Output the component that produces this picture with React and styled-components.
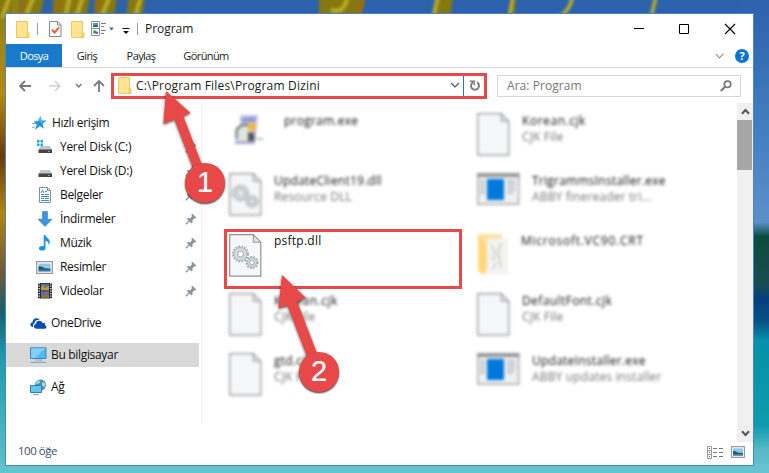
import React from "react";
import styled, { createGlobalStyle } from "styled-components";

const RED = "#e94848";

const places = [
	{ name: "Yerel Disk (C:)", icon: "system" },
	{ name: "Yerel Disk (D:)", icon: "disk" },
	{ name: "Belgeler", icon: "document" },
	{ name: "İndirmeler", icon: "download" },
	{ name: "Müzik", icon: "music" },
	{ name: "Resimler", icon: "picture" },
	{ name: "Videolar", icon: "video" },
];

const files = [
	{ name: "program.exe", icon: "setup", indent: 10 },
	{ name: "Korean.cjk", type: "CJK File", icon: "page", spacing: 0.55 },
	{ name: "UpdateClient19.dll", type: "Resource DLL", icon: "dll" },
	{ name: "TrigrammsInstaller.exe", type: "ABBY finereader tri...", icon: "app", indent: 10 },
	{ name: "psftp.dll", icon: "dll", selected: true },
	{ name: "Microsoft.VC90.CRT", icon: "folder", indent: -1, spacing: 0.75 },
	{ name: "Korean.cjk", type: "CJK File", icon: "page", spacing: 0.55 },
	{ name: "DefaultFont.cjk", type: "CJK File", icon: "page", spacing: 0.4 },
	{ name: "gtd.cjk", type: "CJK File", icon: "page" },
	{ name: "UpdateInstaller.exe", type: "ABBY updates installer", icon: "app", indent: 10 },
];

export default function App() {
	return (
		<>
			<GlobalStyle />
			<Desktop>
				<Wallpaper />
				<Window>
					<TitleBar />
					<Ribbon />
					<Navigation />
					<Body>
						<Sidebar />
						<Files>
							{files.map((file, index) => (
								<FileItem key={index} file={file} />
							))}
						</Files>
						<Scrollbar>
							<Chevron up />
							<Thumb />
							<Chevron />
						</Scrollbar>
					</Body>
					<StatusBar>
						<span>100 öğe</span>
						<DetailsIcon />
						<PictureIcon width="14" height="12" />
					</StatusBar>
				</Window>
				<Arrows />
				<Badge $x={185} $y={163}>1</Badge>
				<Badge $x={299} $y={352}>2</Badge>
			</Desktop>
		</>
	);
}

const TitleBar = () => (
	<TitleRow>
		<FolderIcon />
		<Separator $left={7} $right={11} />
		<CheckIcon />
		<Spacer $w={9} />
		<FolderIcon />
		<Spacer $w={6} />
		<ViewIcon />
		<Separator $left={7} $right={7} />
		<Title>Program</Title>
		<WindowButtons width="102" height="12" viewBox="0 0 102 12" fill="none" stroke="#000">
			<path d="M0 5.5h10M45.5 1.5h9v9h-9z" />
			<path d="M91 1l10 10M101 1L91 11" strokeWidth="1.1" />
		</WindowButtons>
	</TitleRow>
);

const Ribbon = () => (
	<RibbonRow>
		<Tab $w={56} $active>Dosya</Tab>
		<Tab $w={50}>Giriş</Tab>
		<Tab $w={58}>Paylaş</Tab>
		<Tab $w={72}>Görünüm</Tab>
		<RibbonTools>
			<svg width="9" height="6" fill="none" stroke="#999" strokeWidth="1.2">
				<path d="M.7.8l3.8 4 3.8-4" />
			</svg>
			<Help>?</Help>
		</RibbonTools>
	</RibbonRow>
);

const Navigation = () => (
	<NavRow>
		<NavArrows width="86" height="16" viewBox="0 0 86 16" fill="none">
			<path d="M12 8H1M6 3L1 8l5 5" stroke="#777" strokeWidth="1.8" />
			<path d="M30 8h11M36 3l5 5-5 5" stroke="#d0d0d0" strokeWidth="1.5" />
			<path d="M57 6l2.7 3 2.7-3" stroke="#777" strokeWidth="1.5" />
			<path d="M80 14V3M75 8l5-5 5 5" stroke="#7b7b7b" strokeWidth="1.8" />
		</NavArrows>
		<AddressBox>
			<FolderIcon />
			<Address>C:\Program Files\Program Dizini</Address>
			<svg width="10" height="7" fill="none" stroke="#555" strokeWidth="1.2">
				<path d="M1 1l4 4 4-4" />
			</svg>
			<Refresh>
				<svg width="12" height="13" viewBox="0 0 12 13" fill="none" stroke="#7b7b7b">
					<path d="M8.2 3.4A4 4 0 1 1 4 3.3" strokeWidth="1.9" />
					<path d="M1 2.2h4.3v4" strokeWidth="1.5" />
				</svg>
			</Refresh>
		</AddressBox>
		<SearchBox>
			<span>Ara: Program</span>
			<svg width="12" height="12" viewBox="0 0 12 12" fill="none" stroke="#777">
				<circle cx="7.5" cy="4.3" r="3.2" strokeWidth="1.7" />
				<path d="M5 6.8L.8 11" strokeWidth="2" />
			</svg>
		</SearchBox>
	</NavRow>
);

const Sidebar = () => (
	<Side>
		<SideRow $pad={26}>
			<StarIcon />
			<span>Hızlı erişim</span>
		</SideRow>
		{places.map((place) => (
			<SideRow key={place.name} $pad={30} $gap={7}>
				<PlaceIcon type={place.icon} />
				<span>{place.name}</span>
				<Pin width="12" height="12" viewBox="0 0 12 12">
					<path d="M7.3.8l4 3.7-1 .9-.8-.2-2.1 2.2.2 2.3-1 .8L1.8 6l1-.9 2.2.3L7 3.2 6.4 1.7z" fill="#8796a3" />
					<path d="M4.2 7.8L.8 11.2" stroke="#8796a3" strokeWidth="1.3" />
				</Pin>
			</SideRow>
		))}
		<SideRow $pad={24} $top={8} $gap={4}>
			<CloudIcon />
			<span>OneDrive</span>
		</SideRow>
		<SideRow $pad={24} $top={8} $gap={4} $selected>
			<ComputerIcon />
			<span>Bu bilgisayar</span>
		</SideRow>
		<SideRow $pad={24} $top={8} $gap={4}>
			<NetworkIcon />
			<span>Ağ</span>
		</SideRow>
	</Side>
);

const FileItem = ({ file }) => (
	<Cell $selected={file.selected}>
		<IconSlot $top={file.selected ? 2 : 1}>
			<FileIcon type={file.icon} />
		</IconSlot>
		<FileText $indent={file.indent || 0}>
			<FileName $spacing={file.spacing}>{file.name}</FileName>
			{file.type && <FileType>{file.type}</FileType>}
		</FileText>
	</Cell>
);

/* icons */

const FolderIcon = () => (
	<svg width="14" height="17" viewBox="0 0 14 17">
		<path d="M.5.5h11v10.2l1.5 1.2v4.6H.5z" fill="#ffe494" stroke="#ecc75e" />
		<path d="M10.5 16v-4.2l1-1.2 1.3 1.3V16z" fill="#f7d06a" />
	</svg>
);

const CheckIcon = () => (
	<svg width="13" height="16" viewBox="0 0 13 16" fill="none">
		<path d="M.5.5h8.3l3.2 3.2v11.8H.5z" fill="#f7f8fa" stroke="#8a8a8a" />
		<path d="M8.5.5v3.5H12" stroke="#8a8a8a" />
		<path d="M3 8.7l2.5 3L10 6.3" stroke="#e8552d" strokeWidth="1.8" />
	</svg>
);

const ViewIcon = () => (
	<svg width="39" height="16" viewBox="0 0 39 16" fill="none">
		<path d="M.5.5h8v14h-8zM.5 7.5h8" stroke="#919191" fill="#fff" />
		<path d="M2 2h5v4H2z" fill="#4a94d8" />
		<path d="M2 5l3-1 2 1v1H2z" fill="#246a50" />
		<circle cx="3.7" cy="11" r="1.7" fill="#3c9d50" />
		<circle cx="5.8" cy="11.8" r="1.3" fill="#3f6fc2" />
		<path d="M10 2.5h5M10 5.5h3M10 9.5h5M10 12.5h3" stroke="#7d7d7d" />
		<path d="M18 6.5h5l-2.5 3z" fill="#3572bd" />
		<path d="M31.5 7.5h7" stroke="#111" />
		<path d="M32 10h6l-3 3z" fill="#111" />
	</svg>
);

const StarIcon = () => (
	<svg width="15" height="14" viewBox="0 0 15 14">
		<path d="M8.4.2l1.3 4.3 5 .2-4.1 2.9 1.3 5.2-4.1-2.8L3 14l1.7-5.3L1.6 5.4l4.5-.5z" fill="#2491e0" />
		<path d="M8.4.2l1.3 4.3 5 .2-5.5 2-3.1-1.8z" fill="#4eb2f2" />
		<path d="M.3 7.5h2.8M.3 11.5l2.5-.5" stroke="#4aa9e8" />
	</svg>
);

const PlaceIcon = ({ type }) => {
	switch (type) {
		case "system":
		case "disk":
			return (
				<svg width="17" height="16" viewBox="0 0 17 16">
					{type === "system" && <path d="M1 1h2.5v2.5H1zM4.5 1H7v2.5H4.5zM1 4.5h2.5V7H1zM4.5 4.5H7V7H4.5z" fill="#15a9e8" />}
					<path d="M4.5 7h9.5l2 4H2.5z" fill="#c3c6c9" />
					<path d="M2.5 10.5H16V14H2.5z" fill="#424548" />
					<path d="M12 12h2v1h-2z" fill="#49d27c" />
				</svg>
			);
		case "document":
			return (
				<svg width="17" height="16" viewBox="0 0 17 16" fill="none">
					<path d="M3.5.5h8l3 3v12h-11z" fill="#fff" stroke="#8b9094" />
					<path d="M11.5.5v3h3" stroke="#8b9094" />
					<path d="M9 4.5h2M5 7.5h3M9 7.5h4M5 9.5h8M5 11.5h3M9 11.5h4M5 13.5h8" stroke="#3594d8" />
					<path d="M5 6l1.5-3L8 6" stroke="#3594d8" />
				</svg>
			);
		case "download":
			return (
				<svg width="17" height="16" viewBox="0 0 17 16">
					<path d="M6.5.5h5v7.7H16l-7 7.3-7-7.3h4.5z" fill="#3d94e2" stroke="#2e7fcb" strokeWidth=".6" />
				</svg>
			);
		case "music":
			return (
				<svg width="17" height="16" viewBox="0 0 17 16">
					<ellipse cx="6.2" cy="13.3" rx="3.2" ry="2.3" fill="#1795e9" />
					<path d="M7.7 0h1.6c.5 3 4.8 3.4 4.5 7.3-.1 1.7-1.2 3-1.2 3 .4-3-.8-4-3.1-4.6v7.6H7.7z" fill="#1795e9" />
				</svg>
			);
		case "picture":
			return <PictureIcon width="17" height="13" />;
		default:
			return (
				<svg width="17" height="16" viewBox="0 0 17 16">
					<path d="M2 0h14v15.5H2z" fill="#2b2b2b" />
					<path d="M3.2 0v16M14.8 0v16" stroke="#fff" strokeWidth="1.2" strokeDasharray="1.3 1.2" />
					<path d="M5 .8h8v6.5H5zM5 8.3h8v6.5H5z" fill="#3d75c6" />
					<path d="M5 4l3-2 2 2 3-1v4.3H5z" fill="#c49a2d" />
					<path d="M5 11l3 1.5 2-2.5 3 2v2.8H5z" fill="#8a7433" />
					<path d="M8 3h2v2H8zM9 9h2v2H9z" fill="#d94f3e" />
				</svg>
			);
	}
};

const PictureIcon = (props) => (
	<svg viewBox="0 0 17 13" preserveAspectRatio="none" {...props}>
		<path d="M.7.7h15.6v11.6H.7z" fill="#fff" stroke="#9a9a9a" strokeWidth="1.3" />
		<path d="M2.5 2.5h12v8h-12z" fill="#8fc7ee" />
		<path d="M2.5 5.5c3-.8 4 1.5 7 1.7l5 .5v1.5h-12z" fill="#235b5e" />
		<path d="M2.5 8.7h12v1.8h-12z" fill="#3b7fb0" />
	</svg>
);

const CloudIcon = () => (
	<svg width="17" height="14" viewBox="0 0 17 14">
		<path d="M3.3 11C-.6 10.9-.3 6.3 2.6 6.3 2.5 2.3 7.4.8 9.9 3.9c-3-.4-4.9.8-5.3 3C3 7.7 2.7 9.5 3.3 11z" fill="#0a4ab5" />
		<path d="M6.5 12.7C3.3 12.7 3.2 8.1 6 8.1 6.1 4.3 11.2 3.5 12.3 6.8c2.3-.3 3.3 1.1 2.9 2.7 2 .5 1.7 3.2-.6 3.2z" fill="#0a4ab5" />
	</svg>
);

const ComputerIcon = () => (
	<svg width="17" height="16" viewBox="0 0 17 16">
		<path d="M.5.8H16v10.7H.5z" fill="#50baf2" stroke="#3f86b4" />
		<path d="M1 1.3h14.5L5 11H1z" fill="#7fd0fa" />
		<path d="M5 13h7" stroke="#8fa5b5" />
		<path d="M.5 15.3H16" stroke="#6c9fc4" />
	</svg>
);

const NetworkIcon = () => (
	<svg width="17" height="17" viewBox="0 0 17 17">
		<circle cx="10.5" cy="6" r="5.5" fill="#4a8fb5" />
		<path d="M7 2c2-1.5 4 0 3 1.5S7 5 6 5zM12 3l3 1v4l-3-1z" fill="#a9d8d2" />
		<path d="M.5 6.5h11v7H.5z" fill="#62c3f6" stroke="#347fae" />
		<path d="M3 15.7h6" stroke="#7c9bb0" />
	</svg>
);

const DetailsIcon = () => (
	<svg width="17" height="13" viewBox="0 0 17 13" fill="none" stroke="#777">
		<path d="M.5.5h4v12h-4zM.5 4.5h4M.5 8.5h4" stroke="#999" />
		<path d="M6 2.5h4M12 2.5h4M6 6.5h4M12 6.5h4M6 10.5h4M12 10.5h4" />
		<path d="M2 2.5h1" stroke="#555" />
		<path d="M2 6.5h1" stroke="#36f" />
		<path d="M2 10.5h1" stroke="#d22" />
	</svg>
);

const Chevron = ({ up }) => (
	<svg width="9" height="7" viewBox="0 0 9 7" fill="none" stroke="#555" strokeWidth="2">
		<path d={up ? "M1 5.7L4.5 2 8 5.7" : "M1 1.3L4.5 5 8 1.3"} />
	</svg>
);

const Gear = ({ cx, cy, r }) => (
	<g fill="none" stroke="#98a4ad">
		<circle cx={cx} cy={cy} r={r} strokeWidth="1.8" strokeDasharray="1.7 1.3" />
		<circle cx={cx} cy={cy} r={r - 1} fill="#d5dce1" stroke="#a4afb7" strokeWidth=".8" />
		<circle cx={cx} cy={cy} r={r / 2.5} fill="#f8fafb" strokeWidth=".9" />
	</g>
);

const FileIcon = ({ type }) => {
	if (type === "app") {
		return (
			<svg width="43" height="32" viewBox="0 0 43 32">
				<path d="M.7.7h41v30.6H.7z" fill="#eef0f1" stroke="#a5aaad" strokeWidth="1.5" />
				<path d="M0 0h42.5v4H0z" fill="#92979a" />
				<path d="M10 6h17v21H10z" fill="#0078dc" />
				<path d="M3 8h5M3 11h5M3 14h5M3 17h5M3 20h5M30 8h8M30 11h8M30 14h8M30 17h8M30 20h6" stroke="#b4b8bb" strokeWidth="1.5" />
			</svg>
		);
	}
	if (type === "folder") {
		return (
			<svg width="32" height="44" viewBox="0 0 32 44">
				<path d="M1 1h24v8H10v27l-2 4-4-1-3-4z" fill="#fce0a0" />
				<path d="M10 6l21-1v36l-21 1z" fill="#f3f3f1" />
				<path d="M1 1l9 12-1 27-5 1-3-5z" fill="#ffd878" />
				<path d="M15 12l3 8-2 8M24 10l-3 10 3 14M16 35l3-5" stroke="#bcc2c0" strokeWidth="1.2" fill="none" />
			</svg>
		);
	}
	if (type === "setup") {
		return (
			<svg width="40" height="40" viewBox="0 0 40 40">
				<path d="M11 2h18l-2 24H11z" fill="#c3c6ec" />
				<path d="M13 5l14-1-1 5H13z" fill="#9296d0" />
				<path d="M7 13h16v16H7z" fill="#dfe5e1" />
				<path d="M7.5 26V17l5-5H21" fill="none" stroke="#66716d" strokeWidth="2" />
				<circle cx="23" cy="14" r="4.5" fill="#efb84b" />
				<path d="M19 19l6 1 1 9-7 1z" fill="#53575c" />
				<path d="M6 28h20v3H6z" fill="#aaa5d2" />
				<path d="M28 26h6" stroke="#bbb" strokeWidth="2" />
			</svg>
		);
	}
	return (
		<svg width="33" height="43" viewBox="0 0 33 43">
			<path d="M.7.7h23.6l7.5 7.5v34H.7z" fill="#f5f7f8" stroke="#8e9294" strokeWidth="1.2" />
			<path d="M24.3.7v7.5h7.5z" fill="#e3e6e8" stroke="#8e9294" />
			{type === "dll" && (
				<>
					<Gear cx={11.5} cy={20} r={7.5} />
					<Gear cx={23} cy={28.5} r={5.6} />
				</>
			)}
		</svg>
	);
};

const Arrows = () => (
	<ArrowLayer width="769" height="473" fill={RED}>
		<path d="M166 91L190.500 113 183.200 116 202 165 193 168 174.500 119.500 163.500 124z" />
		<path d="M282 275L306 298 297 301.500 318 356 308 359 287.500 305.500 278.500 308.500z" />
	</ArrowLayer>
);

/* blurred palm leaves over a tropical shore */
const Wallpaper = () => (
	<Backdrop width="769" height="473">
		<defs>
			<linearGradient id="left" x2="0" y2="1">
				<stop offset="0" stopColor="#8d8212" />
				<stop offset=".2" stopColor="#b58a0d" />
				<stop offset=".33" stopColor="#6b3c0b" />
				<stop offset=".45" stopColor="#b0870e" />
				<stop offset=".58" stopColor="#6d5a3c" />
				<stop offset=".66" stopColor="#17606c" />
				<stop offset=".75" stopColor="#1c98ab" />
				<stop offset="1" stopColor="#62c3ca" />
			</linearGradient>
			<linearGradient id="right" x2="0" y2="1">
				<stop offset="0" stopColor="#2c62ab" />
				<stop offset=".3" stopColor="#4681c4" />
				<stop offset=".47" stopColor="#5b8fc9" />
				<stop offset=".5" stopColor="#0b4d3d" />
				<stop offset=".6" stopColor="#174d50" />
				<stop offset=".63" stopColor="#063f7c" />
				<stop offset=".68" stopColor="#065285" />
				<stop offset=".72" stopColor="#0790a8" />
				<stop offset=".9" stopColor="#0d9bac" />
				<stop offset=".95" stopColor="#58b8c8" />
				<stop offset="1" stopColor="#63c4ce" />
			</linearGradient>
			<filter id="soft">
				<feGaussianBlur stdDeviation="1.6" />
			</filter>
		</defs>
		<rect width="769" height="473" fill="#2c62ab" />
		<rect x="740" width="29" height="473" fill="url(#right)" />
		<rect width="20" height="473" fill="url(#left)" />
		<rect y="464" width="769" height="9" fill="#66c2cf" />
		<g filter="url(#soft)" fill="none">
			<path d="M-4-4h17l-3 22H-4zM20-4h24l-4 22H18zM54-4h36l-4 22H52zM95-4h22l-3 22H94zM129-4h16l-3 22h-16zM319-4h47l-5 22h-42zM437-4h16l-3 22h-17zM511-4h5l-2 22h-6z" fill="#85790f" />
			<path d="M10-4L2 18M34-4l-9 22M70-4l-5 22M83-4l-7 22M110-4l-9 22M141-4l-6 22M438-4l-5 22M513-4l-4 22M573-4c-3 12-7 16-14 22M656-4l-5 22M331 10c10 3 14-2 17-14" stroke="#c0b028" strokeWidth="3.5" />
			<path d="M26-4l-6 22M60-4l-4 22M100-4l-4 22M363-4l-6 22" stroke="#a8650f" strokeWidth="2.5" />
		</g>
	</Backdrop>
);

/* styles */

const GlobalStyle = createGlobalStyle`
	* {
		box-sizing: border-box;
	}

	body {
		margin: 0;
		overflow: hidden;
		font-family: "Open Sans", "Noto Sans", sans-serif;
		font-size: 12px;
		color: #1b1b1b;
	}

	svg {
		display: block;
		flex-shrink: 0;
	}
`;

const Desktop = styled.div`
	position: relative;
	width: 769px;
	height: 473px;
	padding: 13px 0 0 5px;
	overflow: hidden;
`;

const Backdrop = styled.svg`
	position: absolute;
	inset: 0;
`;

const Window = styled.div`
	position: relative;
	display: flex;
	flex-direction: column;
	width: 749px;
	height: 453px;
	background: #fff;
	border: 1px solid #4c82c6;
`;

const TitleRow = styled.div`
	display: flex;
	align-items: center;
	height: 30px;
	padding-left: 10px;
`;

const Spacer = styled.div`
	width: ${({ $w }) => $w}px;
`;

const Separator = styled.div`
	width: 1px;
	height: 12px;
	margin: 0 ${({ $right }) => $right}px 0 ${({ $left }) => $left}px;
	background: #999;
`;

const Title = styled.div`
	flex: 1;
	padding-bottom: 2px;
	letter-spacing: -0.05px;
`;

const WindowButtons = styled.svg`
	margin-right: 17px;
`;

const RibbonRow = styled.div`
	display: flex;
	height: 24px;
	border-bottom: 1px solid #dadbdc;
`;

const Tab = styled.div`
	width: ${({ $w }) => $w}px;
	height: 23px;
	line-height: 23px;
	text-align: center;
	font-size: 11px;
	letter-spacing: -0.6px;
	color: ${({ $active }) => ($active ? "#fff" : "#222")};
	background: ${({ $active }) => ($active ? "#1979ca" : "transparent")};
`;

const RibbonTools = styled.div`
	display: flex;
	align-items: center;
	gap: 11px;
	margin-left: auto;
	padding-right: 4px;
`;

const Help = styled.div`
	width: 14px;
	height: 14px;
	border-radius: 50%;
	background: #0b74d1;
	color: #fff;
	font-size: 11px;
	font-weight: 700;
	line-height: 14px;
	text-align: center;
`;

const NavRow = styled.div`
	display: flex;
	align-items: center;
	height: 35px;
	padding-left: 13px;
`;

const NavArrows = styled.svg`
	margin-right: 6px;
`;

const AddressBox = styled.div`
	display: flex;
	align-items: center;
	width: 376px;
	height: 26px;
	padding-left: 4px;
	border: 3px solid ${RED};
`;

const Address = styled.div`
	flex: 1;
	padding-left: 4px;
	letter-spacing: 0.18px;
`;

const Refresh = styled.div`
	display: flex;
	align-items: center;
	height: 20px;
	margin-left: 3px;
	padding: 0 3px 0 5px;
	border-left: 1px solid #1979ca;
`;

const SearchBox = styled.div`
	display: flex;
	align-items: center;
	justify-content: space-between;
	width: 244px;
	height: 22px;
	margin-left: 10px;
	padding: 0 8px 0 9px;
	border: 1px solid #d6d6d6;
	color: #777;
	letter-spacing: 0.05px;
`;

const Body = styled.div`
	display: flex;
	height: 339px;
`;

const Side = styled.div`
	width: 196px;
	height: 321px;
	padding-top: 8px;
	border-right: 1px solid #f0f0f0;
`;

const SideRow = styled.div`
	display: flex;
	align-items: center;
	gap: ${({ $gap }) => $gap || 5}px;
	width: 193px;
	height: 24px;
	margin-top: ${({ $top }) => $top || 0}px;
	padding-left: ${({ $pad }) => $pad}px;
	letter-spacing: -0.32px;
	color: #111;
	background: ${({ $selected }) => ($selected ? "#d9d9d9" : "transparent")};

	span {
		padding-bottom: 1px;
	}
`;

const Pin = styled.svg`
	margin: 0 2px 0 auto;
`;

const Files = styled.div`
	display: grid;
	flex: 1;
	grid-template-columns: 238px 238px;
	grid-auto-rows: 60px;
	column-gap: 10px;
	align-content: start;
	padding: 6px 0 0 22px;
`;

const Cell = styled.div`
	display: flex;
	padding: ${({ $selected }) => ($selected ? "0 0 0 2px" : "3px 0 0 5px")};
	border: ${({ $selected }) => ($selected ? `3px solid ${RED}` : "none")};

	> * {
		filter: ${({ $selected }) => ($selected ? "none" : "blur(1.6px)")};
	}
`;

const IconSlot = styled.div`
	flex: none;
	width: 45px;
	padding-top: ${({ $top }) => $top}px;
`;

const FileText = styled.div`
	padding: 1px 0 0 ${({ $indent }) => Math.max($indent, 0)}px;
	margin-left: ${({ $indent }) => Math.min($indent, 0)}px;
	line-height: 16px;
	white-space: nowrap;
`;

const FileName = styled.div`
	height: 16px;
	color: #111;
	letter-spacing: ${({ $spacing }) => $spacing || 0.24}px;
`;

const FileType = styled.div`
	color: #777;
	letter-spacing: 0.15px;
`;

const Scrollbar = styled.div`
	display: flex;
	flex-direction: column;
	align-items: center;
	width: 16px;
	padding: 5px 0;
	background: #f0f0f0;
`;

const Thumb = styled.div`
	width: 15px;
	height: 50px;
	margin: 5px 1px auto 0;
	background: #a6a6a6;
`;

const StatusBar = styled.div`
	display: flex;
	flex: 1;
	align-items: center;
	gap: 7px;
	padding: 0 8px 3px 12px;
	color: #41506b;
	font-size: 11.5px;
	letter-spacing: -0.5px;

	span {
		flex: 1;
		padding-bottom: 3px;
	}
`;

const ArrowLayer = styled.svg`
	position: absolute;
	inset: 0;
	filter: drop-shadow(0 1px 1.5px rgba(0, 0, 0, 0.65));
`;

const Badge = styled.div`
	position: absolute;
	left: ${({ $x }) => $x}px;
	top: ${({ $y }) => $y}px;
	width: 40px;
	height: 40px;
	border-radius: 50%;
	background: ${RED};
	box-shadow: 0 1px 2px rgba(0, 0, 0, 0.8);
	color: #fff;
	font: 29px/39px "Liberation Sans", sans-serif;
	-webkit-text-stroke: 0.2px #fff;
	text-align: center;
`;
